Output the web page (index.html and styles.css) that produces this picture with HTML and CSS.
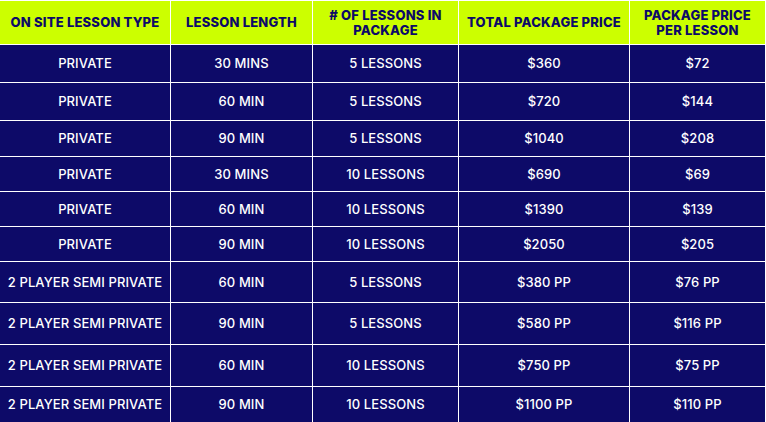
FILE: index.html
```html
<!DOCTYPE html>
<html lang="en">
<head>
<meta charset="utf-8">
<title>On Site Lesson Packages</title>
<link rel="stylesheet" href="styles.css">
</head>
<body>
<div class="price-table" role="table">
  <div class="cell head" role="columnheader">ON SITE LESSON TYPE</div>
  <div class="cell head" role="columnheader">LESSON LENGTH</div>
  <div class="cell head" role="columnheader"># OF LESSONS IN<br>PACKAGE</div>
  <div class="cell head" role="columnheader">TOTAL PACKAGE PRICE</div>
  <div class="cell head" role="columnheader">PACKAGE PRICE<br>PER LESSON</div>

  <div class="cell">PRIVATE</div><div class="cell">30 MINS</div><div class="cell">5 LESSONS</div><div class="cell">$360</div><div class="cell">$72</div>
  <div class="cell">PRIVATE</div><div class="cell">60 MIN</div><div class="cell">5 LESSONS</div><div class="cell">$720</div><div class="cell">$144</div>
  <div class="cell">PRIVATE</div><div class="cell">90 MIN</div><div class="cell">5 LESSONS</div><div class="cell">$1040</div><div class="cell">$208</div>
  <div class="cell">PRIVATE</div><div class="cell">30 MINS</div><div class="cell">10 LESSONS</div><div class="cell">$690</div><div class="cell">$69</div>
  <div class="cell">PRIVATE</div><div class="cell">60 MIN</div><div class="cell">10 LESSONS</div><div class="cell">$1390</div><div class="cell">$139</div>
  <div class="cell">PRIVATE</div><div class="cell">90 MIN</div><div class="cell">10 LESSONS</div><div class="cell">$2050</div><div class="cell">$205</div>
  <div class="cell">2 PLAYER SEMI PRIVATE</div><div class="cell">60 MIN</div><div class="cell">5 LESSONS</div><div class="cell">$380 PP</div><div class="cell">$76 PP</div>
  <div class="cell">2 PLAYER SEMI PRIVATE</div><div class="cell">90 MIN</div><div class="cell">5 LESSONS</div><div class="cell">$580 PP</div><div class="cell">$116 PP</div>
  <div class="cell">2 PLAYER SEMI PRIVATE</div><div class="cell">60 MIN</div><div class="cell">10 LESSONS</div><div class="cell">$750 PP</div><div class="cell">$75 PP</div>
  <div class="cell">2 PLAYER SEMI PRIVATE</div><div class="cell">90 MIN</div><div class="cell">10 LESSONS</div><div class="cell">$1100 PP</div><div class="cell">$110 PP</div>
</div>
</body>
</html>
```

FILE: styles.css
```css
html, body {
  margin: 0;
  padding: 0;
  background: #ffffff;
  overflow: hidden;
}

.price-table {
  display: grid;
  grid-template-columns: 170px 141px 145px 170px 135px;
  grid-template-rows: 43px 37px 37px 35px 34px 34px 34px 40px 41px 41px 35px;
  gap: 1px;
  padding: 1px 1px 0 0;
  width: 766px;
  box-sizing: border-box;
  background: #ffffff;
  font-family: Inter, "Open Sans", sans-serif;
}

.cell {
  display: flex;
  align-items: center;
  justify-content: center;
  text-align: center;
  background: #0d0a68;
  color: #ffffff;
  font-size: 13px;
  font-weight: 500;
  line-height: 15px;
  letter-spacing: 0.1px;
  white-space: nowrap;
}

.head {
  background: #ccff00;
  color: #0d0a68;
  font-weight: 800;
  font-size: 13px;
  letter-spacing: 0.2px;
}
```
